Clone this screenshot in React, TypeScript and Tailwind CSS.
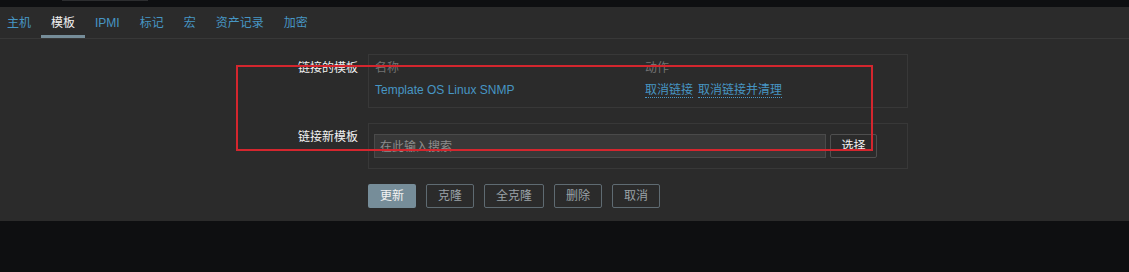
const tabs = ["主机", "模板", "IPMI", "标记", "宏", "资产记录", "加密"];
const actions = ["克隆", "全克隆", "删除", "取消"];

export default function App() {
  return (
    <div className="relative h-[272px] w-full bg-[#0e0f11] text-[12px] font-['Liberation_Sans','Noto_Sans_CJK_SC',sans-serif] text-[#f2f2f2]">
      <div className="h-[7px]">
        <div className="ml-[62px] h-[1px] w-[86px] bg-[#2c2d2f]" />
      </div>

      <div className="bg-[#2b2b2b]">
        <nav className="flex h-[32px] border-b border-[#383838]">
          <div className="-ml-[3px] flex">
            {tabs.map((t) => (
              <div
                key={t}
                className={
                  t === "模板"
                    ? "flex items-center border-b-[3px] border-[#768d99] px-[10px] pt-[3px] text-[#f2f2f2]"
                    : "flex items-center border-b-[3px] border-transparent px-[10px] pt-[3px] text-[#4796c4]"
                }
              >
                {t}
              </div>
            ))}
          </div>
        </nav>

        <div className="flex h-[182px] flex-col gap-[15px] pt-[15px]">
          <div className="flex gap-[10px]">
            <div className="w-[358px] pt-[5px] text-right">链接的模板</div>
            <div className="h-[54px] w-[540px] border border-[#383838] px-[6px] pt-[4px]">
              <div className="flex h-[18px] items-center text-[#737373]">
                <span className="w-[270px]">名称</span>
                <span>动作</span>
              </div>
              <div className="flex h-[26px] items-center">
                <a className="w-[270px] text-[#4796c4]">Template OS Linux SNMP</a>
                <a className="mr-[5px] border-b border-dotted border-[#4796c4] leading-[14px] text-[#4796c4]">取消链接</a>
                <a className="border-b border-dotted border-[#4796c4] leading-[14px] text-[#4796c4]">取消链接并清理</a>
              </div>
            </div>
          </div>

          <div className="flex gap-[10px]">
            <div className="w-[358px] pt-[5px] text-right">链接新模板</div>
            <div className="flex h-[46px] w-[540px] items-center gap-[4px] border border-[#383838] px-[5px]">
              <div className="flex h-[24px] w-[452px] items-center border border-[#4a4a4a] bg-[#383838] px-[5px] pt-[1px] text-[#8c8c8c]">
                在此输入搜索
              </div>
              <button className="h-[24px] w-[47px] rounded-[2px] border border-[#4f4f4f] bg-[#2b2b2b] text-[#f2f2f2]">
                选择
              </button>
            </div>
          </div>

          <div className="flex gap-[10px] pl-[368px]">
            <button className="h-[24px] w-[48px] rounded-[2px] bg-[#768d99] text-[#f2f2f2]">更新</button>
            {actions.map((a) => (
              <button
                key={a}
                className={
                  a === "全克隆"
                    ? "h-[24px] w-[60px] rounded-[2px] border border-[#5f6b72] text-[#9aa2a7]"
                    : "h-[24px] w-[48px] rounded-[2px] border border-[#5f6b72] text-[#9aa2a7]"
                }
              >
                {a}
              </button>
            ))}
          </div>
        </div>
      </div>

      <div className="absolute left-[236px] top-[65px] h-[86px] w-[637px] border-2 border-[#d4262e]" />
    </div>
  );
}
